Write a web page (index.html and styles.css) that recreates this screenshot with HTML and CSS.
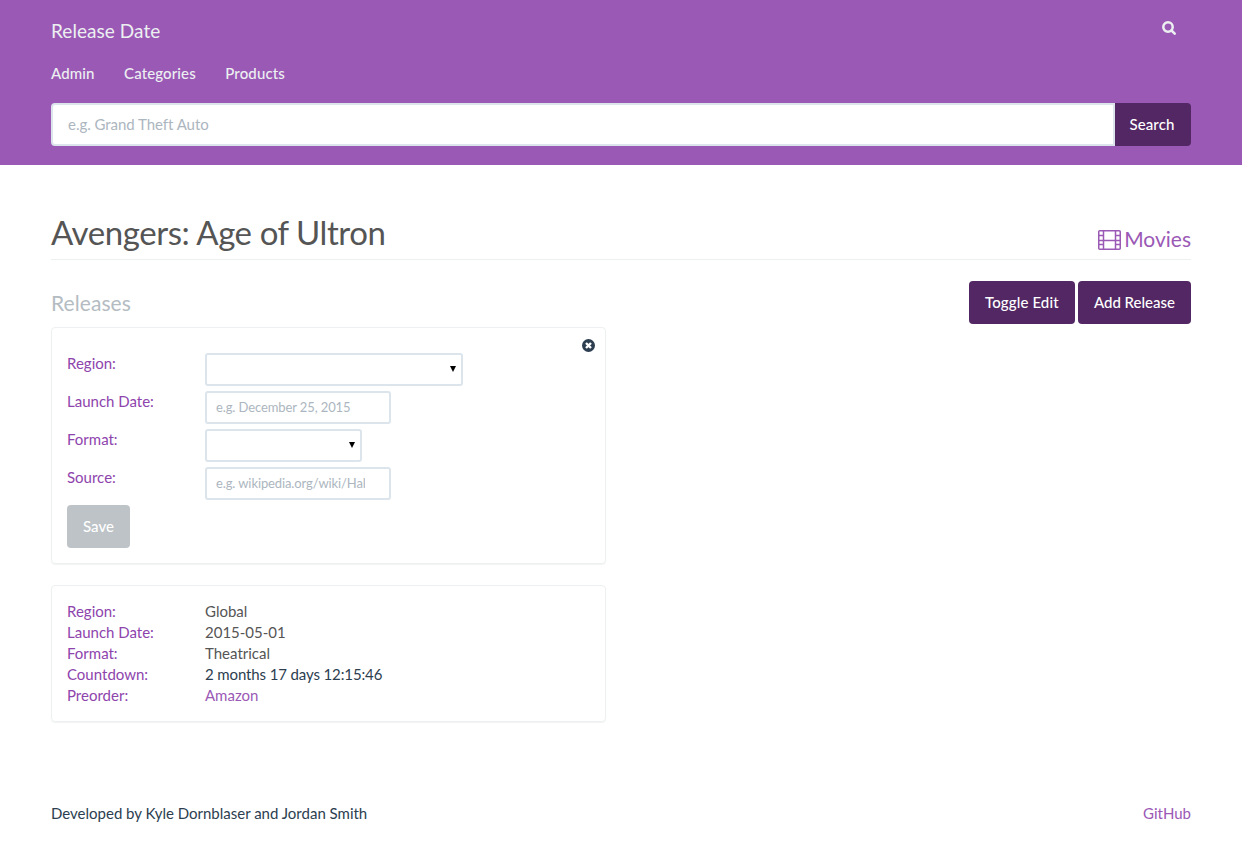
FILE: index.html
```html
<!DOCTYPE html>
<html lang="en">
<head>
<meta charset="utf-8">
<title>Release Date</title>
<link rel="stylesheet" href="styles.css">
</head>
<body>
<header class="navbar">
  <div class="navbar-top">
    <a class="brand">Release Date</a>
    <svg class="icon-search" viewBox="0 0 14 14"><circle cx="6" cy="6" r="4.700"/><path d="M9.500 9.500l3.200 3.200"/></svg>
  </div>
  <nav class="nav"><a>Admin</a><a>Categories</a><a>Products</a></nav>
  <form class="search">
    <input class="search-input" type="text" placeholder="e.g. Grand Theft Auto">
    <button class="btn btn-search" type="button">Search</button>
  </form>
</header>
<main class="content">
  <div class="page-header">
    <h1 class="title">Avengers: Age of Ultron</h1>
    <a class="category">
      <svg class="icon-film" viewBox="0 0 23 20"><rect x="0.750" y="0.750" width="21.500" height="18.500" rx="1"/><path d="M5.500 1v18M17.500 1v18M5.500 10.500h12M1 5.500h4.500M1 10.500h4.500M1 14.500h4.500M17.500 5.500H22M17.500 10.500H22M17.500 14.500H22"/></svg>
      <span>Movies</span>
    </a>
  </div>
  <div class="toolbar">
    <h2 class="subtitle">Releases</h2>
    <div class="actions"><button class="btn btn-toggle" type="button">Toggle Edit</button><button class="btn" type="button">Add Release</button></div>
  </div>
  <section class="card card-form">
    <svg class="icon-close" viewBox="0 0 13 13"><circle cx="6.500" cy="6.500" r="6.500"/><path d="M4 4l5 5M9 4L4 9"/></svg>
    <div class="field"><label class="label">Region:</label><div class="select select-region"><span class="caret"></span></div></div>
    <div class="field"><label class="label">Launch Date:</label><input class="input" type="text" placeholder="e.g. December 25, 2015"></div>
    <div class="field"><label class="label">Format:</label><div class="select select-format"><span class="caret"></span></div></div>
    <div class="field"><label class="label">Source:</label><input class="input" type="text" placeholder="e.g. wikipedia.org/wiki/Halo"></div>
    <button class="btn btn-save" type="button">Save</button>
  </section>
  <section class="card">
    <dl class="details">
      <dt class="label">Region:</dt><dd class="value">Global</dd>
      <dt class="label">Launch Date:</dt><dd class="value">2015-05-01</dd>
      <dt class="label">Format:</dt><dd class="value">Theatrical</dd>
      <dt class="label">Countdown:</dt><dd class="value value-dark">2 months 17 days 12:15:46</dd>
      <dt class="label">Preorder:</dt><dd class="value"><a class="link">Amazon</a></dd>
    </dl>
  </section>
</main>
<footer class="footer"><span>Developed by Kyle Dornblaser and Jordan Smith</span><a class="link">GitHub</a></footer>
</body>
</html>
```
FILE: styles.css
```css
* { box-sizing: border-box; }
body {
  margin: 0;
  font-family: Lato, sans-serif;
  font-size: 15px;
  line-height: 21px;
  color: #2c3e50;
  background: #fff;
}
.navbar {
  height: 165px;
  padding: 20px 51px 0;
  background: #9b59b6;
  color: #ecf0f1;
}
.navbar-top { display: flex; justify-content: space-between; height: 43px; }
.brand { font-size: 19px; line-height: 21px; letter-spacing: 0.05px; }
.icon-search { width: 14px; height: 14px; margin: 1px 15px 0 0; fill: none; stroke: #ecf0f1; stroke-width: 2.500; stroke-linecap: round; }
.nav { display: flex; gap: 29.500px; height: 40px; font-weight: 500; letter-spacing: 0.120px; }
.search { display: flex; }
.search-input {
  flex: 1;
  height: 43px;
  padding: 0 15px 2px;
  border: 2px solid #dce4ec;
  border-radius: 4px 0 0 4px;
  font: 15px/21px Lato, sans-serif;
  letter-spacing: -0.040px;
}
.search-input::placeholder, .input::placeholder { color: #acb6c0; opacity: 1; }
.btn {
  height: 43px;
  padding: 0 16px;
  border: 0;
  border-radius: 4px;
  background: #522764;
  color: #fff;
  font: 500 15px/21px Lato, sans-serif;
  white-space: nowrap;
}
.btn-search { width: 76px; padding: 0 2px 0 0; border-radius: 0 4px 4px 0; letter-spacing: 0.100px; }
.btn-toggle { width: 106px; letter-spacing: 0.120px; }
.content { padding: 48px 51px 0; }
.page-header {
  display: flex;
  justify-content: space-between;
  height: 47px;
  border-bottom: 1px solid #ecf0f1;
}
.title { margin: 0; font-size: 33px; line-height: 38px; font-weight: 400; letter-spacing: -0.430px; color: #555; }
.category { display: flex; gap: 3px; padding-top: 13px; font-size: 21px; line-height: 26px; color: #9b59b6; }
.icon-film { width: 23px; height: 20px; margin-top: 4px; fill: none; stroke: #9b59b6; stroke-width: 1.5; }
.toolbar { display: flex; justify-content: space-between; height: 67px; padding-top: 21px; }
.subtitle { margin: 9px 0 0; font-size: 21px; line-height: 26px; font-weight: 400; letter-spacing: 0.080px; color: #b4bcc2; }
.actions { display: flex; gap: 3px; }
.card {
  position: relative;
  width: 555px;
  margin-bottom: 21px;
  padding: 15px;
  border: 1px solid #ecf0f1;
  border-radius: 4px;
  box-shadow: 0 1px 1px rgba(0, 0, 0, .05);
}
.card-form { height: 237px; padding-top: 25px; }
.icon-close { position: absolute; top: 11px; right: 10px; width: 13px; height: 13px; fill: #2c3e50; stroke: #fff; stroke-width: 2.400; }
.icon-close circle { stroke: none; }
.field { display: grid; grid-template-columns: 138px auto; justify-content: start; height: 38px; }
.label { color: #8e44ad; }
.input, .select {
  height: 33px;
  border: 2px solid #dce4ec;
  border-radius: 3px;
  background: #fff;
}
.input { width: 186px; padding: 0 24px 2px 9px; font: 13px/18px Lato, sans-serif; letter-spacing: -0.110px; }
.select { display: flex; align-items: center; justify-content: flex-end; padding-right: 5px; }
.select-region { width: 258px; }
.select-format { width: 157px; }
.caret { border: 3px solid transparent; border-top: 6px solid #000; border-bottom: 0; margin-top: -1px; }
.btn-save { background: #bdc3c7; }
.details { display: grid; grid-template-columns: 138px 1fr; margin: 0; }
.value { margin: 0; color: #555; }
.value-dark { color: #2c3e50; letter-spacing: -0.120px; }
.link { color: #9b59b6; }
.footer { display: flex; justify-content: space-between; padding: 60px 51px 0; }
```
